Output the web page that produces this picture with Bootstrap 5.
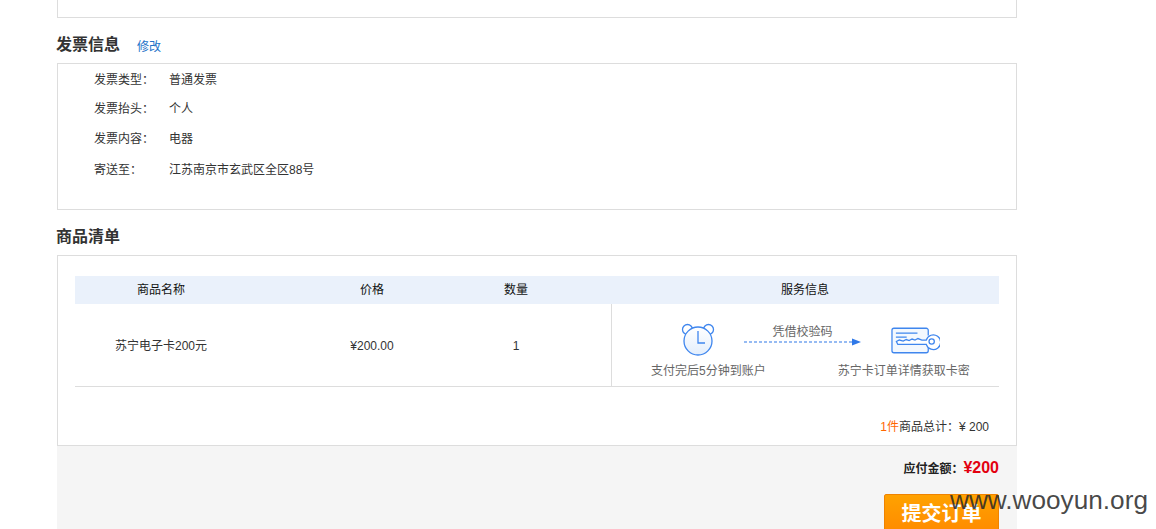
<!DOCTYPE html>
<html lang="zh"><head><meta charset="utf-8"><title>确认订单</title>
<link href="https://cdn.jsdelivr.net/npm/bootstrap@5.3.0/dist/css/bootstrap.min.css" rel="stylesheet">
<style>
html,body{height:529px;overflow:hidden;background:#fff}
body{font-family:"Liberation Sans","Noto Sans CJK SC",sans-serif;font-size:12px;color:#333;line-height:18px}
.wrap{width:960px;margin-left:57px}
.stub{height:18px;border:1px solid #ddd;border-top:0}
.sec-head{height:45px;padding-top:17px}
.sec-head h5{font-size:16px;font-weight:700;line-height:20px;margin:0 0 0 -1px;color:#333}
.sec-head a{color:#2272c8;text-decoration:none;margin-left:17px;margin-top:3px}
.inv-box{height:147px;border:1px solid #ddd;padding:7px 0 0 36px}
.inv-row{height:30px;line-height:18px}
.inv-row:nth-child(1){height:29px}
.inv-row:nth-child(3){height:31px}
.inv-label{width:75px}
.goods-box{height:191px;border:1px solid #ddd;padding:20px 17px 0 17px}
.goods-head{height:28px;background:#eaf1fb;color:#111;line-height:28px}
.c-name{width:172px}.c-price{width:250px}.c-qty{width:114px;padding-right:76px}.c-serv{width:388px}
.goods-row{height:83px;border-bottom:1px solid #ddd}
.goods-row .c-serv{border-left:1px solid #ddd;height:82px;padding-top:19px}
.goods-row .cell{line-height:18px;padding-top:33px}
.serv-icons{height:34px;padding-left:69px}
.arrow{width:117px;margin-left:29px;color:#666}
.arrow span{display:block;line-height:16px;margin-top:1px;text-align:center}
.arrow svg{display:block;margin-top:-2px}
.key-i{margin-left:30px;margin-top:4px}
.serv-text{color:#666;margin-top:5px;padding-left:39px}
.serv-text .second-c{margin-left:72px}
.goods-sum{text-align:right;padding:31px 10px 0 0}
.goods-sum b{font-weight:400;color:#f60}
.pay{background:#f5f5f5;height:83px;padding:13px 18px 0 0;text-align:right;overflow:hidden}
.pay-label{font-weight:700;color:#222}
.pay-val{font-size:16px;font-weight:700;color:#e3000f}
.submit-o{display:block;width:115px;height:40px;margin:16px 0 0 auto;padding:0;border:1px solid #f08300;border-radius:2px;background:linear-gradient(#ffa200,#ff8a00);color:#fff;font-size:20px;font-weight:700;line-height:39px;text-align:center}
.mark-w{position:absolute;left:950px;top:485px;font-size:26.200px;line-height:30px;color:rgba(40,40,40,.85);white-space:nowrap}
</style></head><body>
<div class="wrap">
 <div class="stub"></div>
 <div class="sec-head d-flex align-items-start"><h5>发票信息</h5><a href="#">修改</a></div>
 <div class="inv-box">
  <div class="inv-row d-flex"><div class="inv-label">发票类型：</div><div>普通发票</div></div>
  <div class="inv-row d-flex"><div class="inv-label">发票抬头：</div><div>个人</div></div>
  <div class="inv-row d-flex"><div class="inv-label">发票内容：</div><div>电器</div></div>
  <div class="inv-row d-flex"><div class="inv-label">寄送至：</div><div>江苏南京市玄武区全区88号</div></div>
 </div>
 <div class="sec-head"><h5>商品清单</h5></div>
 <div class="goods-box">
  <div class="goods-head d-flex text-center">
   <div class="c-name">商品名称</div><div class="c-price">价格</div><div class="c-qty">数量</div><div class="c-serv">服务信息</div>
  </div>
  <div class="goods-row d-flex text-center">
   <div class="c-name cell">苏宁电子卡200元</div><div class="c-price cell">¥200.00</div><div class="c-qty cell">1</div>
   <div class="c-serv text-start">
    <div class="serv-icons d-flex align-items-start">
     <svg width="34" height="34" viewBox="0 0 34 34" fill="none" stroke="#3f86ee" stroke-width="1.3"><defs><linearGradient id="cg" x1="0" y1="0" x2="0" y2="1"><stop offset="0" stop-color="#fff"/><stop offset="1" stop-color="#e3eefc"/></linearGradient></defs><circle cx="6.500" cy="6.500" r="5"/><circle cx="27.500" cy="6.500" r="5"/><circle cx="17" cy="18" r="14" fill="url(#cg)"/><path d="M17 8V20H24"/></svg>
     <div class="arrow"><span>凭借校验码</span><svg width="117" height="8" viewBox="0 0 117 8"><path d="M0 4H108" stroke="#2f78e8" stroke-width="1.200" stroke-dasharray="3 2"/><path d="M108 0.500 117 4 108 7.500Z" fill="#2f78e8"/></svg></div>
     <svg class="key-i" width="49" height="28" viewBox="0 0 50 28" fill="none" stroke="#3f86ee" stroke-width="1.300"><path d="M38 8.500V3a2 2 0 0 0-2-2H3a2 2 0 0 0-2 2v21a2 2 0 0 0 2 2h33a2 2 0 0 0 2-2v-4" fill="#f3f8fe"/><path d="M5 6H27M5 10H16"/><path d="M7 17.500l-1.500-3 3-1.500 4 1 3-1.500 3 1 3-1.500 3 1 3-1.500 4 1.500h4.500a7.500 7.500 0 1 1 0 4.500H7Z" fill="#fff"/><circle cx="41.500" cy="14.500" r="2.700"/></svg>
    </div>
    <div class="serv-text d-flex"><span>支付完后5分钟到账户</span><span class="second-c">苏宁卡订单详情获取卡密</span></div>
   </div>
  </div>
  <div class="goods-sum"><b>1件</b>商品总计：¥ 200</div>
 </div>
 <div class="pay">
  <div><span class="pay-label">应付金额：</span><span class="pay-val">¥200</span></div>
  <a class="submit-o text-decoration-none" href="#">提交订单</a>
 </div>
</div>
<div class="mark-w">www.wooyun.org</div>
</body></html>
